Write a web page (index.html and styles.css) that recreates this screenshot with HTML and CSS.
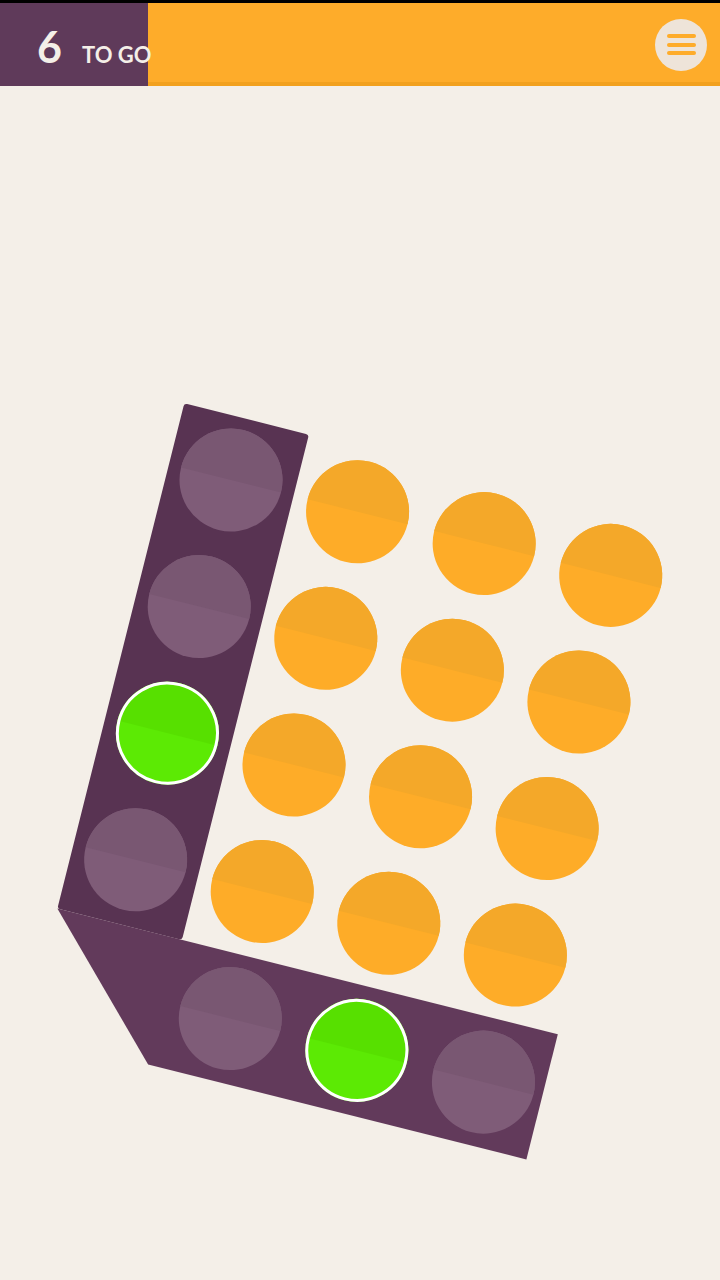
FILE: index.html
```html
<!DOCTYPE html>
<html lang="en">
<head>
    <meta charset="UTF-8">
    <meta name="viewport" content="width=device-width, initial-scale=1.0">
    <title>Puzzle</title>
    <link rel="stylesheet" href="styles.css">
</head>
<body>
    <div class="statusbar"></div>
    <header class="topbar">
        <div class="count">
            <span class="count-num">6</span>
            <span class="count-label">TO GO</span>
        </div>
        <button class="menu-btn" aria-label="Menu">
            <span></span><span></span><span></span>
        </button>
    </header>

    <svg class="board" viewBox="0 86 720 1194" width="720" height="1194">
        <defs>
            <path id="tophalf" d="M -51.5 0 A 51.5 51.5 0 0 1 51.5 0 Z"/>
        </defs>
        <g transform="translate(231 480) rotate(14.1)">
            <!-- pieces -->
            <rect class="arm-v" x="-64" y="-63" width="128.5" height="521" rx="3"/>
            <polygon class="arm-h" points="-64,458 452,458 452,587 62,587"/>

            <!-- holes in the pieces -->
            <g class="dot purple" transform="translate(0 0)"><circle r="51.5"/><use href="#tophalf"/></g>
            <g class="dot purple" transform="translate(0 130.5)"><circle r="51.5"/><use href="#tophalf"/></g>
            <g class="dot green" transform="translate(0 261)"><circle r="51.5"/><use href="#tophalf"/><circle class="ring" r="50"/></g>
            <g class="dot purple" transform="translate(0 391.5)"><circle r="51.5"/><use href="#tophalf"/></g>
            <g class="dot purple" transform="translate(130.5 522.5)"><circle r="51.5"/><use href="#tophalf"/></g>
            <g class="dot green" transform="translate(261 522.5)"><circle r="51.5"/><use href="#tophalf"/><circle class="ring" r="50"/></g>
            <g class="dot purple" transform="translate(391.5 522.5)"><circle r="51.5"/><use href="#tophalf"/></g>

            <!-- orange grid -->
            <g class="dot orange" transform="translate(130.5 0)"><circle r="51.5"/><use href="#tophalf"/></g>
            <g class="dot orange" transform="translate(261 0)"><circle r="51.5"/><use href="#tophalf"/></g>
            <g class="dot orange" transform="translate(391.5 0)"><circle r="51.5"/><use href="#tophalf"/></g>
            <g class="dot orange" transform="translate(130.5 130.5)"><circle r="51.5"/><use href="#tophalf"/></g>
            <g class="dot orange" transform="translate(261 130.5)"><circle r="51.5"/><use href="#tophalf"/></g>
            <g class="dot orange" transform="translate(391.5 130.5)"><circle r="51.5"/><use href="#tophalf"/></g>
            <g class="dot orange" transform="translate(130.5 261)"><circle r="51.5"/><use href="#tophalf"/></g>
            <g class="dot orange" transform="translate(261 261)"><circle r="51.5"/><use href="#tophalf"/></g>
            <g class="dot orange" transform="translate(391.5 261)"><circle r="51.5"/><use href="#tophalf"/></g>
            <g class="dot orange" transform="translate(130.5 391.5)"><circle r="51.5"/><use href="#tophalf"/></g>
            <g class="dot orange" transform="translate(261 391.5)"><circle r="51.5"/><use href="#tophalf"/></g>
            <g class="dot orange" transform="translate(391.5 391.5)"><circle r="51.5"/><use href="#tophalf"/></g>
        </g>
    </svg>
</body>
</html>
```

FILE: styles.css
```css
body {
    margin: 0;
    padding: 0;
    background-color: #f4efe8;
    font-family: Lato, "Open Sans", sans-serif;
    overflow: hidden;
}
.statusbar {
    height: 3px;
    background-color: #000;
}
.topbar {
    height: 83px;
    display: flex;
    align-items: center;
    justify-content: space-between;
    background-color: #feac2a;
    box-shadow: inset 0 -4px 0 #f2a11f;
}
.count {
    width: 148px;
    height: 100%;
    box-sizing: border-box;
    padding: 22px 0 0 37px;
    display: flex;
    align-items: baseline;
    gap: 20px;
    background-color: #5f3a5a;
    color: #f4efe8;
    white-space: nowrap;
}
.count-num {
    font-size: 43px;
    font-weight: 700;
    line-height: 1;
}
.count-label {
    font-size: 22px;
    font-weight: 700;
}
.menu-btn {
    width: 52px;
    height: 52px;
    margin-right: 13px;
    border: none;
    border-radius: 50%;
    background-color: #eee4d9;
    display: flex;
    flex-direction: column;
    align-items: center;
    justify-content: center;
    gap: 4.5px;
    padding: 0;
    cursor: pointer;
}
.menu-btn span {
    display: block;
    width: 29px;
    height: 4px;
    border-radius: 2px;
    background-color: #feac2a;
}
.board {
    display: block;
}
.arm-v {
    fill: #583352;
}
.arm-h {
    fill: #623a5b;
}
.dot.orange circle {
    fill: #feac28;
}
.dot.orange use {
    fill: #f4a829;
}
.dot.purple circle {
    fill: #7f5c78;
}
.dot.purple use {
    fill: #795772;
}
.dot.green circle {
    fill: #5cea04;
}
.dot.green use {
    fill: #57e000;
}
.dot.green .ring {
    fill: none;
    stroke: #ffffff;
    stroke-width: 3px;
}
```
